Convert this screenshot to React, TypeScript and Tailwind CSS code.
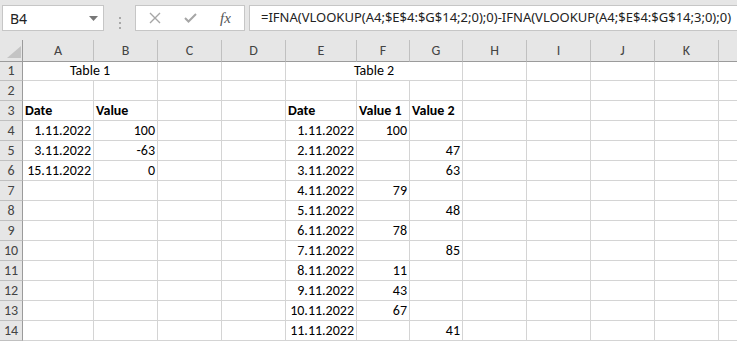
import React from 'react';

type Cell = { text?: string; bold?: boolean; align?: 'left' | 'right' | 'center'; span?: 1 | 2 | 3 };

// L is only a sliver at the right edge, its letter falls outside the window
const colLetters = ['A', 'B', 'C', 'D', 'E', 'F', 'G', 'H', 'I', 'J', 'K', ''];

const table2: [string, string, string][] = [
    ['1.11.2022', '100', ''],
    ['2.11.2022', '', '47'],
    ['3.11.2022', '', '63'],
    ['4.11.2022', '79', ''],
    ['5.11.2022', '', '48'],
    ['6.11.2022', '78', ''],
    ['7.11.2022', '', '85'],
    ['8.11.2022', '11', ''],
    ['9.11.2022', '43', ''],
    ['10.11.2022', '67', ''],
    ['11.11.2022', '', '41'],
];

const table1: [string, string][] = [
    ['1.11.2022', '100'],
    ['3.11.2022', '-63'],
    ['15.11.2022', '0'],
];

const empty = (n: number): Cell[] => Array.from({ length: n }, () => ({}));

// every row spans 12 columns (A..L) once the spans are counted
const buildRows = (): Cell[][] => {
    const rows: Cell[][] = [];
    rows.push([
        { text: 'Table 1', align: 'center', span: 2 },
        {},
        {},
        { text: 'Table 2', align: 'center', span: 3 },
        ...empty(5),
    ]);
    rows.push(empty(12));
    rows.push([
        { text: 'Date', bold: true },
        { text: 'Value', bold: true },
        {},
        {},
        { text: 'Date', bold: true },
        { text: 'Value 1', bold: true },
        { text: 'Value 2', bold: true },
        ...empty(5),
    ]);
    for (let i = 0; i < 11; i++) {
        const t1 = table1[i];
        const t2 = table2[i];
        rows.push([
            { text: t1 ? t1[0] : '', align: 'right' },
            { text: t1 ? t1[1] : '', align: 'right' },
            {},
            {},
            { text: t2[0], align: 'right' },
            { text: t2[1], align: 'right' },
            { text: t2[2], align: 'right' },
            ...empty(5),
        ]);
    }
    return rows;
};

const spanClass = (span?: number) => (span === 3 ? 'col-span-3' : span === 2 ? 'col-span-2' : '');
const alignClass = (align?: string) =>
    align === 'right' ? 'justify-end pr-[2px]' : align === 'center' ? 'justify-center' : 'justify-start pl-[2px]';

const NameBox: React.FC = () => (
    <div className="ml-[2px] mt-[5px] flex h-[26px] w-[102px] items-center justify-between border border-[#c6c6c6] bg-white pl-[7px] pr-[5px]">
        <span className="font-['Segoe_UI','Noto_Sans',sans-serif] text-[14px] text-[#222]">B4</span>
        <svg width="9" height="5" viewBox="0 0 9 5"><path d="M0 0 L9 0 L4.5 5 Z" fill="#777" /></svg>
    </div>
);

const App: React.FC = () => {
    const rows = buildRows();

    return (
        <div className="h-[343px] w-[737px] overflow-hidden bg-white font-['Calibri','Carlito','Lato',sans-serif]">
            {/* formula bar */}
            <div className="flex h-[40px] bg-[#e6e6e6]">
                <NameBox />
                <div className="mt-[5px] flex w-[31px] flex-col items-center justify-center gap-[3px]">
                    <span className="h-[2px] w-[2px] bg-[#a8a8a8]" />
                    <span className="h-[2px] w-[2px] bg-[#a8a8a8]" />
                    <span className="h-[2px] w-[2px] bg-[#a8a8a8]" />
                </div>
                <div className="mt-[5px] flex h-[26px] w-[110px] items-center border border-[#c6c6c6] bg-white">
                    <div className="flex w-[37px] justify-center">
                        <svg width="12" height="12" viewBox="0 0 12 12">
                            <path d="M1 1 L11 11 M11 1 L1 11" stroke="#a6a6a6" strokeWidth="1.4" />
                        </svg>
                    </div>
                    <div className="flex w-[34px] justify-center">
                        <svg width="13" height="10" viewBox="0 0 13 10">
                            <path d="M1 5 L4.5 8.5 L12 1" stroke="#a6a6a6" strokeWidth="2" fill="none" />
                        </svg>
                    </div>
                    <div className="flex w-[37px] justify-center">
                        <span className="font-['Liberation_Serif',serif] text-[15px] italic text-[#555]">fx</span>
                    </div>
                </div>
                <div className="ml-[4px] mt-[5px] flex h-[26px] flex-1 items-center overflow-hidden whitespace-nowrap border border-r-0 border-[#c6c6c6] bg-white pl-[11px] font-['Segoe_UI','Noto_Sans',sans-serif] text-[13px] text-[#222]">
                    =IFNA(VLOOKUP(A4;$E$4:$G$14;2;0);0)-IFNA(VLOOKUP(A4;$E$4:$G$14;3;0);0)
                </div>
            </div>

            {/* sheet */}
            <div className="grid w-[783px] grid-cols-[23px_71px_64px_64px_64px_71px_53px_53px_64px_64px_64px_64px_64px] text-[14px] text-black">
                {/* column headers */}
                <div className="relative h-[22px] border-b border-r border-[#9b9b9b] bg-[#e6e6e6]">
                    <svg className="absolute bottom-[3px] right-[1px]" width="14" height="12" viewBox="0 0 14 12">
                        <path d="M14 0 L14 12 L0 12 Z" fill="#c4c4c4" />
                    </svg>
                </div>
                {colLetters.map((l, i) => (
                    <div
                        key={i}
                        className="flex h-[22px] items-center justify-center border-b border-r border-b-[#9b9b9b] border-r-[#c0c0c0] bg-[#e6e6e6] text-[#444]"
                    >
                        {l}
                    </div>
                ))}

                {rows.map((row, ri) => {
                    const h = ri === 0 ? 'h-[19px]' : 'h-[20px]';
                    return (
                        <React.Fragment key={ri}>
                            <div
                                className={`${h} flex items-end justify-center border-b border-r border-b-[#c0c0c0] border-r-[#9b9b9b] bg-[#e6e6e6] pb-[2px] leading-none text-[#444]`}
                            >
                                {ri + 1}
                            </div>
                            {row.map((c, ci) => (
                                <div
                                    key={ci}
                                    className={`${h} ${spanClass(c.span)} ${alignClass(c.align)} flex items-end whitespace-nowrap border-b border-r border-[#d4d4d4] pb-[2px] leading-none ${c.bold ? 'font-bold' : ''}`}
                                >
                                    {c.text}
                                </div>
                            ))}
                        </React.Fragment>
                    );
                })}
            </div>
        </div>
    );
};

export default App;
